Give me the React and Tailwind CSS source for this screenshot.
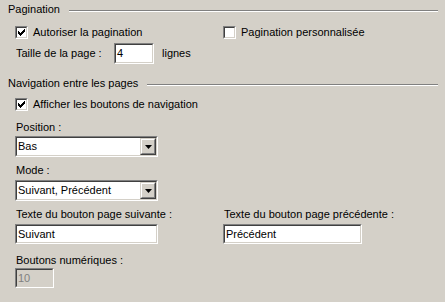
import React from "react";

const font = { fontFamily: '"Liberation Sans", Arial, sans-serif' };

function Sunken({ className = "", inner = "bg-white", children }) {
  return (
    <div className={`border border-t-[#808080] border-l-[#808080] border-b-white border-r-white ${className}`}>
      <div className={`h-full border border-t-[#404040] border-l-[#404040] border-b-[#d4d0c8] border-r-[#d4d0c8] ${inner}`}>
        {children}
      </div>
    </div>
  );
}

function GroupHeader({ title }) {
  return (
    <div className="flex items-start pl-[8px] pr-[7px]">
      <span className="leading-[13px]">{title}</span>
      <div className="flex-1 ml-[9px] mt-[7px] h-[2px] border-t border-t-[#808080] border-b border-b-white" />
    </div>
  );
}

function Checkbox({ checked, label }) {
  return (
    <div className="flex items-center h-[13px]">
      <Sunken className="w-[13px] h-[13px]">
        {checked && (
          <svg width="9" height="9" viewBox="0 0 9 9" className="block">
            <path d="M1 3v3h1v1h1v1h1V7h1V6h1V5h1V4h1V1H7v1H6v1H5v1H4v1H3V4H2V3z" fill="#000" />
          </svg>
        )}
      </Sunken>
      <span className="ml-[5px] leading-[13px]">{label}</span>
    </div>
  );
}

function TextBox({ value, className = "", disabled }) {
  return (
    <Sunken className={className} inner={disabled ? "bg-[#d4d0c8]" : "bg-white"}>
      <div className={`pl-[1px] leading-[17px] ${disabled ? "text-[#808080]" : ""}`}>{value}</div>
    </Sunken>
  );
}

function Select({ value }) {
  return (
    <Sunken className="w-[143px] h-[21px]">
      <div className="flex h-full">
        <div className="flex-1 pl-[1px] leading-[17px]">{value}</div>
        <div className="w-[16px] h-[17px] border border-t-[#d4d0c8] border-l-[#d4d0c8] border-b-[#404040] border-r-[#404040]">
          <div className="h-full flex items-center justify-center bg-[#d4d0c8] border border-t-white border-l-white border-b-[#808080] border-r-[#808080]">
            <svg width="7" height="4" viewBox="0 0 7 4" className="block">
              <path d="M0 0h7L3.5 4z" fill="#000" />
            </svg>
          </div>
        </div>
      </div>
    </Sunken>
  );
}

export default function App() {
  return (
    <div className="w-[445px] h-[302px] bg-[#d4d0c8] text-[11px] text-black overflow-hidden" style={font}>
      <div className="pt-[3px]">
        <GroupHeader title="Pagination" />

        <div className="flex mt-[10px] pl-[15px]">
          <div className="w-[208px]">
            <Checkbox checked label="Autoriser la pagination" />
          </div>
          <Checkbox label="Pagination personnalisée" />
        </div>

        <div className="flex items-center mt-[4px] pl-[16px]">
          <span className="w-[98px]">Taille de la page :</span>
          <TextBox value="4" className="w-[40px] h-[21px]" />
          <span className="ml-[8px]">lignes</span>
        </div>

        <div className="mt-[13px]">
          <GroupHeader title="Navigation entre les pages" />
        </div>

        <div className="mt-[8px] pl-[15px]">
          <Checkbox checked label="Afficher les boutons de navigation" />
        </div>

        <div className="pl-[15px]">
          <div className="mt-[10px] pl-[1px] leading-[13px]">Position :</div>
          <div className="mt-[2px]">
            <Select value="Bas" />
          </div>
          <div className="mt-[7px] pl-[1px] leading-[13px]">Mode :</div>
          <div className="mt-[3px]">
            <Select value="Suivant, Précédent" />
          </div>

          <div className="flex mt-[7px]">
            <div className="w-[208px]">
              <div className="pl-[1px] leading-[13px]">Texte du bouton page suivante :</div>
              <TextBox value="Suivant" className="mt-[3px] w-[143px] h-[20px]" />
            </div>
            <div>
              <div className="pl-[1px] leading-[13px]">Texte du bouton page précédente :</div>
              <TextBox value="Précédent" className="mt-[3px] w-[139px] h-[20px]" />
            </div>
          </div>

          <div className="mt-[10px] pl-[1px] leading-[13px]">Boutons numériques :</div>
          <TextBox value="10" disabled className="mt-[1px] w-[39px] h-[20px]" />
        </div>
      </div>
    </div>
  );
}
